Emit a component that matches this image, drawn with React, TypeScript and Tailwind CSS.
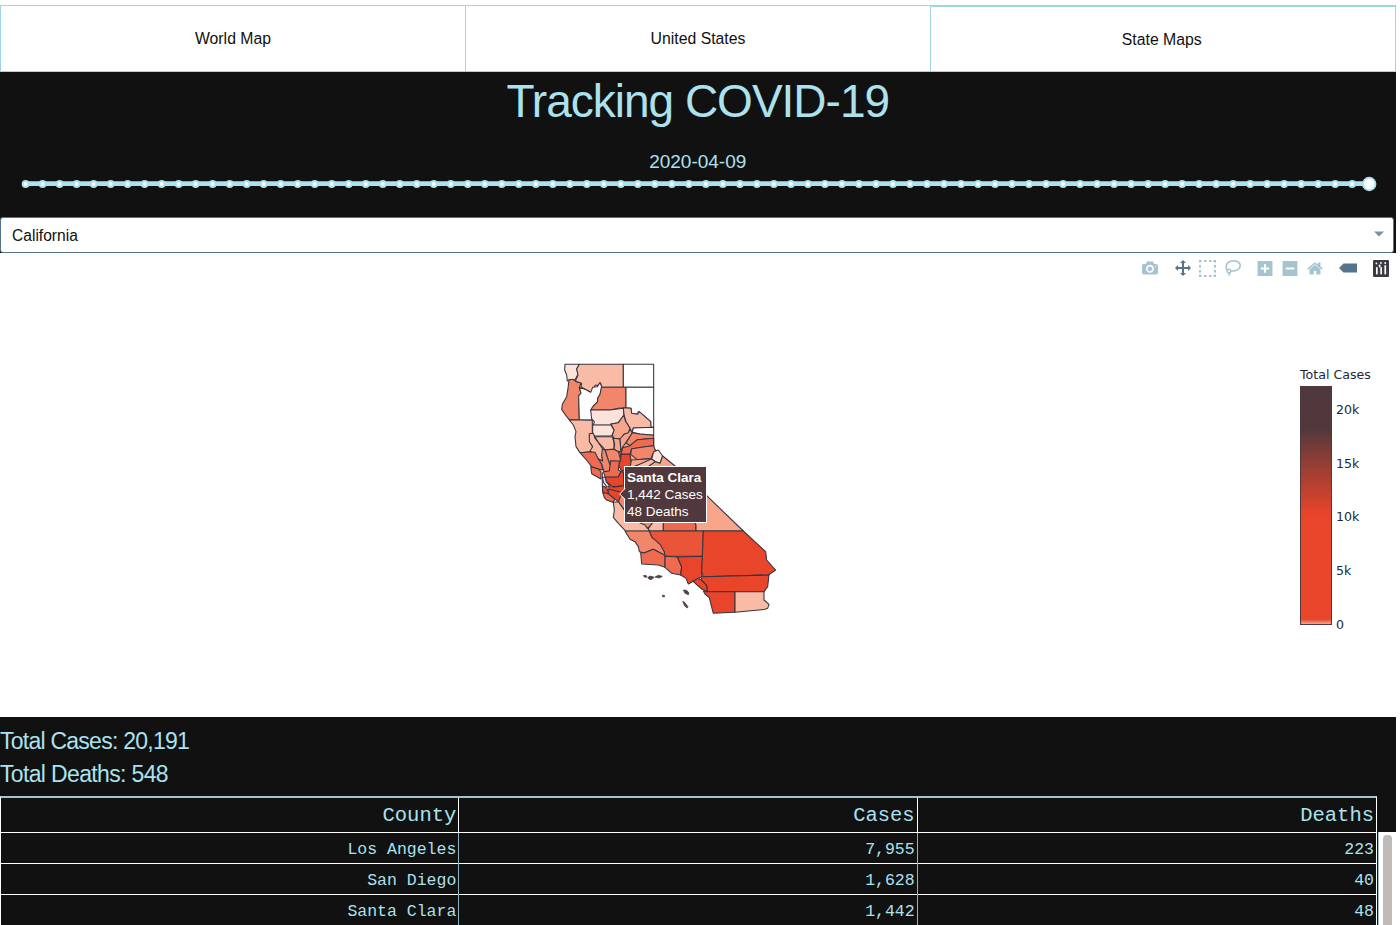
import React from "react";

const W = "#ffffff";
const PALE = "#fce3da";
const LIGHT = "#f9bba6";
const SALMON = "#f7a58b";
const MID = "#f2866a";
const WARM = "#ee6b4f";
const HOT = "#ea5539";
const RED = "#e8452b";

type County = { n: string; f: string; p: string };

// Points are in thirds of a pixel, measured from the north-west corner of the map.
const north: County[] = [
  { n: "Del Norte", f: PALE, p: "45,28 88,28 80,42 84,58 76,73 58,74 52,78 50,60 44,45" },
  { n: "Siskiyou", f: LIGHT, p: "88,28 220,28 220,97 154,97 152,84 142,92 136,90 128,108 122,112 108,104 93,95 95,86 76,78 84,60 80,42" },
  { n: "Modoc", f: W, p: "220,28 311,28 311,97 220,97" },
  { n: "Humboldt", f: MID, p: "57,74 70,73 78,80 93,84 88,98 93,115 86,122 88,195 57,193 45,178 35,163 37,148 50,125 54,100" },
  { n: "Trinity", f: W, p: "88,97 108,104 122,112 128,97 142,95 150,83 156,97 150,120 143,130 143,140 125,160 128,172 127,195 88,195 86,122 93,115" },
  { n: "Shasta", f: MID, p: "154,97 228,97 228,158 205,160 180,165 122,165 130,153 143,140 143,130 150,118" },
  { n: "Lassen", f: W, p: "228,97 311,97 311,217 302,217 302,200 285,185 265,170 262,178 245,175 243,160 228,158" },
  { n: "Tehama", f: PALE, p: "122,165 180,165 220,160 222,180 213,192 205,203 183,207 183,211 130,210 133,200 125,192" },
  { n: "Plumas", f: LIGHT, p: "220,158 243,160 245,175 262,178 268,170 285,185 302,200 303,217 250,219 246,235 240,220 228,200 222,180" },
  { n: "Butte", f: SALMON, p: "222,180 226,198 240,220 235,235 222,238 215,252 192,250 187,240 192,225 183,207 205,203" },
  { n: "Glenn", f: PALE, p: "128,210 183,210 192,226 185,243 134,243 128,235" },
  { n: "Mendocino", f: LIGHT, p: "57,194 127,196 127,235 118,240 120,260 128,275 125,290 90,293 78,275 75,245 78,230 70,210" },
  { n: "Lake", f: LIGHT, p: "118,236 130,235 135,250 145,262 157,280 162,290 155,300 158,318 145,312 135,298 120,288 128,275 118,260" },
  { n: "Colusa", f: LIGHT, p: "135,245 187,245 192,262 192,282 165,284 145,262" },
  { n: "Sierra", f: W, p: "250,219 311,217 311,241 270,237 247,232" },
  { n: "Sutter", f: SALMON, p: "190,250 210,252 213,290 200,288 192,282 194,268" },
  { n: "Yuba", f: SALMON, p: "210,252 222,238 235,233 240,222 247,234 228,262 218,276 213,290" },
  { n: "Nevada", f: MID, p: "247,233 270,237 311,241 311,250 262,254 240,272 228,264" },
  { n: "Placer", f: WARM, p: "262,254 311,250 311,272 285,275 245,282 240,297 213,298 218,278 240,272" },
  { n: "El Dorado", f: MID, p: "245,281 285,275 311,272 317,290 308,297 304,310 262,314 242,298" },
  { n: "Yolo", f: MID, p: "165,285 192,283 205,290 212,315 205,330 182,335 175,316" },
  { n: "Napa", f: MID, p: "157,283 165,285 175,316 182,335 178,348 162,350 155,328 145,312 158,318 155,300" },
  { n: "Sonoma", f: WARM, p: "90,293 120,290 135,292 145,312 155,328 158,345 145,342 125,335 112,318" },
  { n: "Sacramento", f: RED, p: "213,298 240,297 244,325 240,340 218,354 205,330 212,315" },
  { n: "Solano", f: WARM, p: "182,317 208,318 205,345 213,350 205,366 165,365 160,350 178,348" },
  { n: "Amador", f: SALMON, p: "244,315 304,311 300,325 262,331 240,341" },
  { n: "Alpine", f: PALE, p: "311,290 325,285 338,303 330,325 316,320 305,312" },
  { n: "Calaveras", f: LIGHT, p: "240,340 262,331 304,312 316,320 295,335 260,350 240,350" },
  { n: "Tuolumne", f: SALMON, p: "295,335 316,320 330,325 338,303 390,345 290,350" },
  { n: "Marin", f: WARM, p: "122,335 145,342 153,350 153,372 125,356" },
  { n: "San Joaquin", f: RED, p: "213,350 240,335 244,350 244,415 228,415" },
  { n: "Contra Costa", f: RED, p: "165,367 205,366 213,350 220,352 222,392 180,395 168,378" },
  { n: "Alameda", f: RED, p: "172,382 190,397 222,392 230,418 188,413 178,402" },
  { n: "San Mateo", f: RED, p: "157,392 170,398 176,415 165,420 158,410" },
  { n: "Santa Clara", f: RED, p: "174,402 215,412 230,418 226,446 205,440 176,418" },
  { n: "Santa Cruz", f: WARM, p: "158,412 176,417 195,433 188,442 170,435 163,428" },
  { n: "Stanislaus", f: MID, p: "215,415 250,415 250,470 226,468 205,441" },
];

const south: County[] = [
  { n: "Monterey", f: LIGHT, p: "190,442 205,440 226,470 255,495 285,500 295,520 298,528 228,529 205,505 190,487 193,465" },
  { n: "Fresno", f: MID, p: "250,495 310,495 305,510 292,520 285,510" },
  { n: "Kings", f: LIGHT, p: "295,520 310,500 340,500 340,528 298,528" },
  { n: "Tulare", f: WARM, p: "340,495 432,495 438,510 438,528 340,528" },
  { n: "Inyo", f: SALMON, p: "430,495 460,412 470,422 580,528 438,528 438,510" },
  { n: "San Luis Obispo", f: MID, p: "225,528 298,528 306,547 330,565 343,585 345,603 310,583 282,594 268,590 265,575 255,560 240,553" },
  { n: "Kern", f: HOT, p: "298,528 460,528 458,604 345,604 343,590 330,568 306,547" },
  { n: "Santa Barbara", f: WARM, p: "272,592 282,594 310,583 345,601 345,637 325,630 275,627" },
  { n: "Ventura", f: WARM, p: "345,604 382,606 395,635 392,660 365,655 345,637" },
  { n: "Los Angeles", f: RED, p: "382,606 458,604 455,665 443,672 430,678 415,687 408,670 392,660 395,635" },
  { n: "San Bernardino", f: RED, p: "460,528 580,528 620,565 647,590 650,615 677,645 655,660 460,665 455,650" },
  { n: "Riverside", f: RED, p: "457,665 657,660 653,695 642,710 472,710 470,692 453,674" },
  { n: "Orange", f: RED, p: "430,680 443,670 453,674 470,692 472,710 455,702" },
  { n: "San Diego", f: RED, p: "472,710 555,710 555,772 490,775 482,745 478,728 465,717 460,708" },
  { n: "Imperial", f: LIGHT, p: "555,710 642,710 642,735 657,748 653,760 645,763 555,772" },
];

const islands = [
  "280,662 288,661 291,666 284,667",
  "293,668 300,663 313,667 303,674 297,672",
  "315,666 325,661 337,664 328,669",
  "337,720 344,722 343,726 338,725",
  "400,705 410,706 417,714 415,719 405,715",
  "398,739 404,742 414,755 412,759 404,753",
];

function CountyMap() {
  return (
    <svg width="240" height="270" viewBox="0 0 720 810" aria-label="California counties">
      <g stroke="#38343f" strokeWidth="3.2" strokeLinejoin="round">
        <polygon fill={SALMON} points="190,252 311,250 311,280 470,422 500,500 230,500 226,446 205,440 215,350 212,300" />
        {north.concat(south).map((c) => (
          <polygon key={c.n} fill={c.f} points={c.p} />
        ))}
        <path d="M157,367 l8,0 l4,14 l10,12 l-8,3 l-10,-13 z" fill="#dff2f7" />
        <path d="M157,352 L157,392" fill="none" />
        {islands.map((p) => (
          <polygon key={p} points={p} fill="#5b4147" strokeWidth="2" />
        ))}
      </g>
    </svg>
  );
}

function PlotIcon({ d, w = 1000, color = "#a6c4d0", cls = "h-4 w-4" }: { d: string; w?: number; color?: string; cls?: string }) {
  return (
    <svg viewBox={`0 0 ${w} 1000`} className={cls}>
      <path d={d} transform="matrix(1 0 0 -1 0 850)" fill={color} />
    </svg>
  );
}

const CAMERA =
  "m500 450c-83 0-150-67-150-150 0-83 67-150 150-150 83 0 150 67 150 150 0 83-67 150-150 150z m400 150h-120c-16 0-34 13-39 29l-31 93c-6 15-23 28-40 28h-340c-16 0-34-13-39-28l-31-94c-6-15-23-28-40-28h-120c-55 0-100-45-100-100v-450c0-55 45-100 100-100h800c55 0 100 45 100 100v450c0 55-45 100-100 100z m-400-550c-138 0-250 112-250 250 0 138 112 250 250 250 138 0 250-112 250-250 0-138-112-250-250-250z m365 380c-19 0-35 16-35 35 0 19 16 35 35 35 19 0 35-16 35-35 0-19-16-35-35-35z";
const PAN =
  "m1000 350l-187 188 0-125-250 0 0 250 125 0-188 187-187-187 125 0 0-250-250 0 0 125-188-188 186-187 0 125 252 0 0-250-125 0 187-188 188 188-125 0 0 250 250 0 0-126 187 188z";
const PLUS =
  "m1 787l0-875 875 0 0 875-875 0z m687-500l-187 0 0-187-125 0 0 187-188 0 0 125 188 0 0 187 125 0 0-187 187 0 0-125z";
const MINUS = "m0 788l0-876 875 0 0 876-875 0z m688-500l-500 0 0 125 500 0 0-125z";
const HOME =
  "m786 296v-267q0-15-11-26t-25-10h-214v214h-143v-214h-214q-15 0-25 10t-11 26v267q0 1 0 2t0 2l321 264 321-264q1-1 1-4z m124 39l-34-41q-5-5-12-6h-2q-7 0-12 3l-386 322-386-322q-7-4-13-4-7 2-12 7l-35 41q-4 5-3 13t6 12l401 334q18 15 42 15t43-15l136-114v109q0 8 5 13t13 5h107q8 0 13-5t5-13v-227l122-102q5-5 6-12t-4-13z";
const TAG = "m375 725l0 0-375-375 375-374 0-1 1125 0 0 750-1125 0z";

function Modebar() {
  return (
    <div className="flex h-4 items-center justify-end pr-[7px]">
      <PlotIcon d={CAMERA} cls="mr-[17px] h-4 w-4" />
      <PlotIcon d={PAN} color="#567389" cls="mr-2 h-4 w-4" />
      <svg viewBox="0 0 17 17" className="mr-[9px] h-[17px] w-[17px]" fill="#a6c4d0">
        {[0, 5, 10, 14.5].map((v) => (
          <g key={v}>
            <rect x={v} y="0" width="2.5" height="2" />
            <rect x={v} y="15" width="2.5" height="2" />
            <rect x="0" y={v} width="2" height="2.5" />
            <rect x="15" y={v} width="2" height="2.5" />
          </g>
        ))}
      </svg>
      <svg viewBox="0 0 16 16" className="mr-4 h-4 w-4" fill="none" stroke="#a6c4d0" strokeWidth="1.5">
        <path d="M2.5 10.3C-0.2 7.4 1 2.6 5.6 1.2C10.5-0.2 15.4 2 15.2 5.8C15 9.5 10.4 11.4 6 11" />
        <circle cx="4" cy="11" r="1.8" />
        <path d="M4.6 12.6Q5 14.5 3.4 15.3" />
      </svg>
      <PlotIcon d={PLUS} w={875} cls="mr-[9px] h-[17px] w-4" />
      <PlotIcon d={MINUS} w={875} cls="mr-[9px] h-[17px] w-4" />
      <PlotIcon d={HOME} w={928.6} cls="mr-4 h-[17px] w-4" />
      <PlotIcon d={TAG} w={1500} color="#567389" cls="mr-4 h-[12px] w-[18px]" />
      <svg viewBox="0 0 16 17" className="h-[17px] w-4">
        <rect width="16" height="17" rx="1" fill="#3b3a45" />
        <g fill="#fff">
          <rect x="3" y="7" width="1.7" height="7.5" rx=".8" />
          <rect x="5.8" y="4.5" width="1.7" height="3" rx=".8" />
          <rect x="7.3" y="7" width="1.7" height="7.5" rx=".8" />
          <rect x="11.4" y="5" width="1.7" height="9.5" rx=".8" />
          <circle cx="3.4" cy="3.4" r=".9" />
          <circle cx="7.9" cy="3" r=".9" />
          <circle cx="12.2" cy="3" r=".9" />
        </g>
      </svg>
    </div>
  );
}

function Slider() {
  const steps = Array.from({ length: 79 }, (_, i) => i);
  return (
    <svg width="1396" height="16" viewBox="0 0 1396 16" className="block">
      <rect x="23" y="5.2" width="1346" height="4.8" rx="2" fill="#abe2ee" />
      {steps.map((i) => (
        <circle key={i} cx={25.6 + (i * 1343.6) / 79} cy="8" r="2.9" fill="#fff" stroke="#abe2ee" strokeWidth="2" />
      ))}
      <circle cx="1369.2" cy="8" r="6.2" fill="#fff" stroke="#abe2ee" strokeWidth="2" />
    </svg>
  );
}

const tabs = ["World Map", "United States"];
const ticks = ["20k", "15k", "10k", "5k", "0"];
const rows = [
  ["Los Angeles", "7,955", "223"],
  ["San Diego", "1,628", "40"],
  ["Santa Clara", "1,442", "48"],
];

export default function App() {
  return (
    <div className="h-[925px] w-[1400px] overflow-hidden bg-white pt-[5px] font-['Liberation_Sans',Arial,sans-serif]">
      <div className="w-[1395.5px]">
        <nav className="flex h-[67px] text-[15.8px] text-[#111]">
          {tabs.map((t) => (
            <div key={t} className="flex w-[465px] items-center justify-center border border-r-0 border-[#9fd5e3]">
              {t}
            </div>
          ))}
          <div className="flex flex-1 items-center justify-center border border-t-2 border-[#9fd5e3]">
            <span className="pt-px pr-[2px]">State Maps</span>
          </div>
        </nav>

        <header className="flex h-[145px] flex-col items-center bg-[#111111] text-[#abe2ee]">
          <h1 className="mt-[2px] h-[54px] text-[46px] leading-[54px] tracking-[-1px]">Tracking COVID-19</h1>
          <div className="mt-[22px] h-[24px] text-[19px] leading-[24px]">2020-04-09</div>
          <div className="mt-[2px] w-[1396px]">
            <Slider />
          </div>
        </header>

        <div className="h-9 bg-[#111111] pr-[2px]">
          <div className="flex h-9 items-center justify-between rounded-[3px] border border-[#567389] bg-white pr-[9px] pl-[11px] text-[15.6px] text-[#111]">
            <span className="pt-[2px]">California</span>
            <svg width="10" height="6" viewBox="0 0 10 6" className="-mt-[3px]">
              <path d="M0 0.5H10L5 5.5Z" fill="#7292a6" />
            </svg>
          </div>
        </div>

        <main className="flex h-[464px] flex-col pt-[7px]">
          <Modebar />
          <div className="flex flex-1 items-start">
            <div className="relative mt-[79px] ml-[550px] h-[270px] w-[240px]">
              <CountyMap />
              <div className="absolute top-[111px] left-[74px] h-[57px] w-[83px] border border-white bg-[#50383c] pt-[2px] pl-[2px] text-[13.5px] leading-[17px] whitespace-nowrap text-white">
                <div className="font-bold">Santa Clara</div>
                <div>1,442 Cases</div>
                <div>48 Deaths</div>
              </div>
              <svg width="7" height="12" viewBox="0 0 7 12" className="absolute top-[133px] left-[69px]">
                <path d="M7 0L0.7 6L7 12Z" fill="#50383c" />
                <path d="M6 0.5L0.7 6L6 11.5" fill="none" stroke="#fff" strokeWidth="1" />
              </svg>
            </div>
            <div className="mt-[90px] ml-[510px] font-['DejaVu_Sans',Verdana,sans-serif] text-[12.6px] text-[#1d2836]">
              <div className="h-[20px] pt-px leading-[16px] whitespace-nowrap">Total Cases</div>
              <div className="flex">
                <div className="h-[239px] w-8 border border-[#50383c] bg-[linear-gradient(to_bottom,#50383c_0%,#50383c_17%,#9e3f34_35%,#e8452b_54%,#e8452b_98%,#f7a58b_100%)]" />
                <div className="ml-[4px] flex flex-col gap-[37.7px] pt-4">
                  {ticks.map((t) => (
                    <div key={t} className="h-4 leading-4">
                      {t}
                    </div>
                  ))}
                </div>
              </div>
            </div>
          </div>
        </main>

        <section className="h-[208px] bg-[#111111] pt-2 text-[#abe2ee]">
          <div className="h-[33px] text-[23px] leading-[33px] tracking-[-0.75px]">Total Cases: 20,191</div>
          <div className="h-[33px] text-[23px] leading-[33px] tracking-[-0.65px]">Total Deaths: 548</div>
          <div className="mt-[5px] flex font-['Liberation_Mono','Courier_New',monospace]">
            <div className="w-[1377px] border-t-2 border-r border-l border-t-[#a6c4d0] border-r-white border-l-white">
              <div className="grid h-[35px] grid-cols-3 border-b border-white text-right text-[20.5px] leading-[36px]">
                <div className="border-r border-white pr-[2px]">County</div>
                <div className="border-r border-white pr-[2px]">Cases</div>
                <div className="pr-[2px]">Deaths</div>
              </div>
              {rows.map((r) => (
                <div key={r[0]} className="grid h-[31px] grid-cols-3 border-b border-white text-right text-[16.5px] leading-[33px]">
                  <div className="border-r border-[#8db5c4] pr-[2px]">{r[0]}</div>
                  <div className="border-r border-[#8db5c4] pr-[2px]">{r[1]}</div>
                  <div className="pr-[2px]">{r[2]}</div>
                </div>
              ))}
            </div>
            <div className="mt-[36px] ml-px h-[93px] flex-1 border-l border-[#a6c4d0] bg-white pt-[3px] pl-1">
              <div className="h-[100px] w-[9px] rounded-t-[4px] bg-[#c0bbb8]" />
            </div>
          </div>
        </section>
      </div>
    </div>
  );
}
